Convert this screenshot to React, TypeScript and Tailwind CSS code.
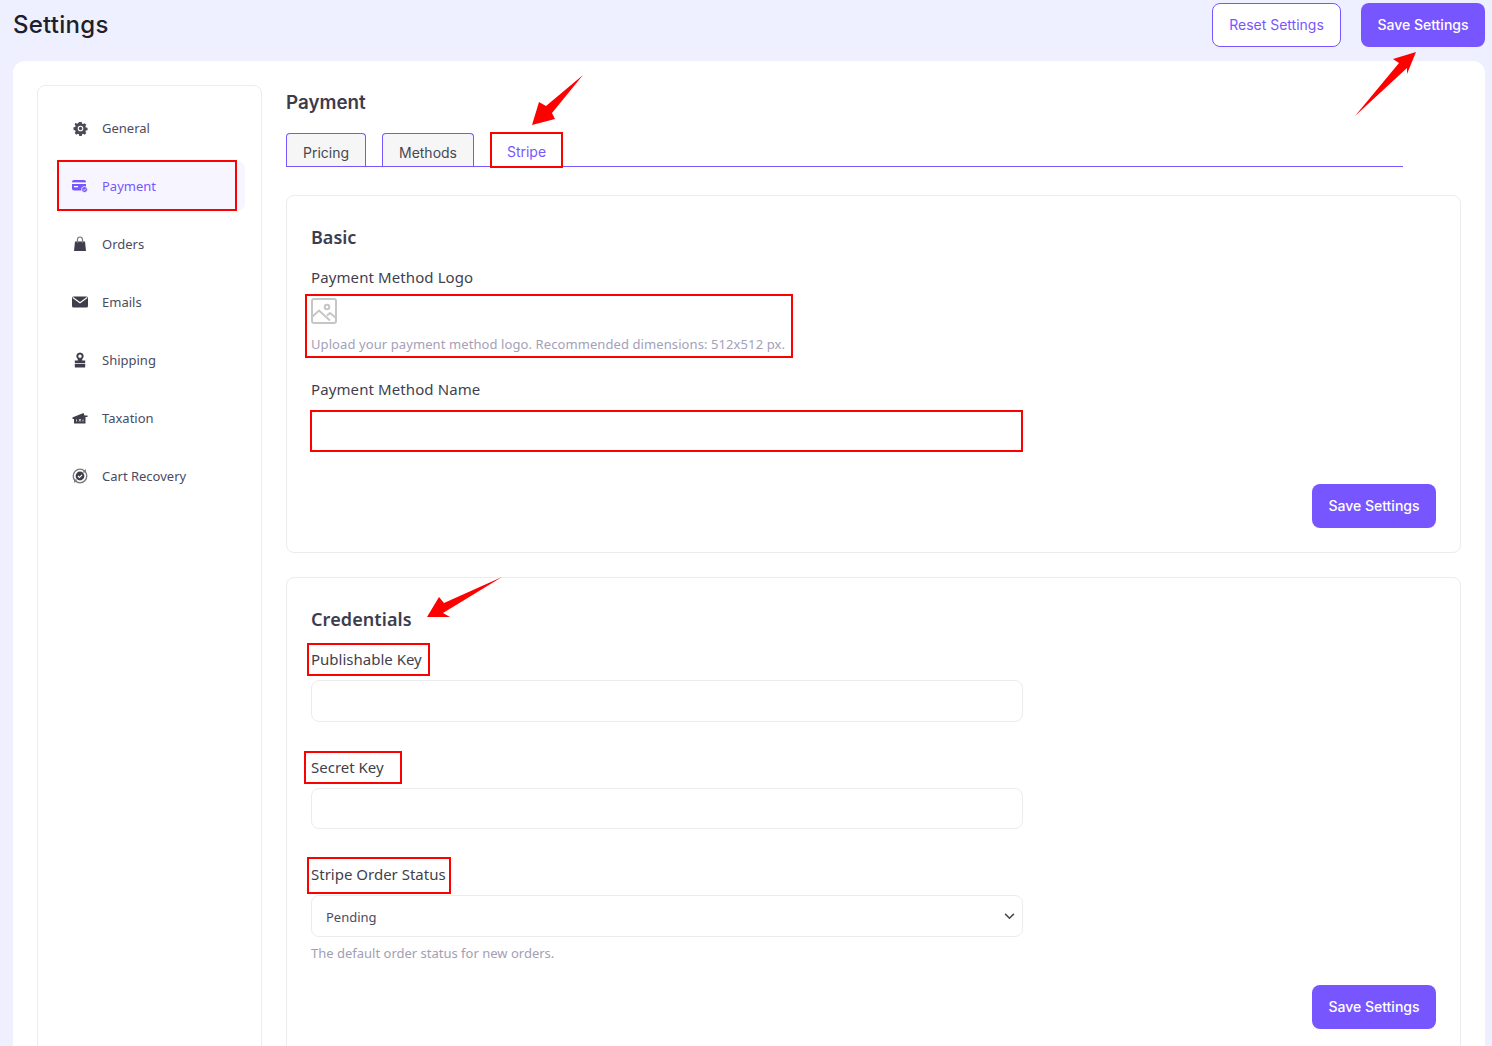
import React from "react";

function Gear() {
  return (
    <svg viewBox="0 0 16 16" className="w-[15px] h-[15px]" fill="#4a4a57">
      <path fillRule="evenodd" d="M6.7 1h2.600l.4 1.800 1.100.5 1.600-1 1.800 1.800-1 1.600.5 1.100 1.800.4v2.600l-1.800.4-.5 1.100 1 1.600-1.800 1.800-1.600-1-1.100.5-.4 1.800H6.700l-.4-1.800-1.100-.5-1.600 1-1.800-1.800 1-1.600-.5-1.100L.5 9.300V6.700l1.800-.4.5-1.100-1-1.600L2.600 1.800l1.600 1 1.100-.5zM8 5a3 3 0 1 0 0 6 3 3 0 0 0 0-6z" />
      <circle cx="8" cy="8" r="1.800" />
    </svg>
  );
}
function Card() {
  return (
    <svg viewBox="0 0 16 14" className="w-4 h-[14px]">
      <rect x="0" y="1" width="14" height="10.500" rx="2" fill="#7856ff" />
      <rect x="0" y="3.400" width="14" height="1.600" fill="#fff" />
      <rect x="2" y="7" width="4" height="1.300" fill="#fff" />
      <circle cx="12.500" cy="10.500" r="3" fill="#7856ff" stroke="#fff" strokeWidth="0.800" />
      <path d="M11.200 10.500l1 1 1.600-1.800" stroke="#fff" strokeWidth="0.800" fill="none" />
    </svg>
  );
}
function Bag() {
  return (
    <svg viewBox="0 0 16 16" className="w-4 h-4" fill="#3f3f4b">
      <path d="M3 5.500h10l1 9.500H2z" />
      <path d="M5.500 7V3.500a2.500 2.500 0 0 1 5 0V7" fill="none" stroke="#77777f" strokeWidth="1.200" />
    </svg>
  );
}
function Mail() {
  return (
    <svg viewBox="0 0 16 12" className="w-4 h-3">
      <rect x="0" y="0.500" width="16" height="11" rx="1.500" fill="#3f3f4b" />
      <path d="M0.800 1.500L8 6.800l7.200-5.300" fill="none" stroke="#fff" strokeWidth="1.100" />
    </svg>
  );
}
function Stamp() {
  return (
    <svg viewBox="0 0 16 16" className="w-4 h-4" fill="#3f3f4b">
      <path fillRule="evenodd" d="M8 .5a3.700 3.700 0 0 1 2.200 6.700V8.500h3v2.500H2.800V8.500h3V7.200A3.700 3.700 0 0 1 8 .5zm0 2a1.700 1.700 0 1 0 0 3.400 1.700 1.700 0 0 0 0-3.400z" />
      <rect x="2.800" y="11.800" width="10.400" height="3.700" rx="0.500" />
    </svg>
  );
}
function Tax() {
  return (
    <svg viewBox="0 0 16 14" className="w-4 h-[14px]" fill="#3f3f4b">
      <path d="M1.500 6L11.500 2l1 2.500H15.500V6h-2v6.500H2V8H.5V6.500z" />
      <path d="M4.500 8.500v2M7 8l1.800 2.500M8.800 8L7 10.500M11 8.500v2" stroke="#fff" strokeWidth="0.700" fill="none" />
    </svg>
  );
}
function Recovery() {
  return (
    <svg viewBox="0 0 16 16" className="w-4 h-4">
      <circle cx="8" cy="8" r="6.800" fill="none" stroke="#77777f" strokeWidth="1.300" />
      <path d="M13.900 0.900v3.600h-3.600zM2.100 15.100v-3.600h3.600z" fill="#77777f" />
      <circle cx="8" cy="8" r="4.400" fill="#3f3f4b" />
      <path d="M6 8l1.500 1.500L10 6.800" fill="none" stroke="#fff" strokeWidth="1.100" />
    </svg>
  );
}

const nav: [string, React.ReactNode, boolean][] = [
  ["General", <Gear />, false],
  ["Payment", <Card />, true],
  ["Orders", <Bag />, false],
  ["Emails", <Mail />, false],
  ["Shipping", <Stamp />, false],
  ["Taxation", <Tax />, false],
  ["Cart Recovery", <Recovery />, false],
];

function SaveButton() {
  return (
    <button className="h-11 w-[124px] rounded-lg bg-[#7856ff] text-white text-sm font-medium font-['Inter',sans-serif]">
      Save Settings
    </button>
  );
}

function Label({ children, wide }: { children: React.ReactNode; wide?: boolean }) {
  return (
    <div className={wide ? "text-[15px] leading-[22px] tracking-[0.1px] text-[#3f3f4f]" : "text-[15px] leading-[22px] text-[#3f3f4f]"}>
      {children}
    </div>
  );
}

function Tab({ label, active, className = "" }: { label: string; active?: boolean; className?: string }) {
  return (
    <div
      className={
        active
          ? `h-[33px] pt-[5px] flex items-center justify-center text-sm text-[#7856ff] bg-white ${className}`
          : `h-[33px] pt-[5px] flex items-center justify-center text-sm text-[#48484f] bg-[#f6f6f6] border border-b-0 border-[#7856ff] rounded-t ${className}`
      }
    >
      {label}
    </div>
  );
}

export default function App() {
  return (
    <div className="relative h-[1046px] w-[1492px] overflow-hidden bg-[#eef0ff] font-['Noto_Sans',sans-serif]">
      {/* header */}
      <header className="h-[61px] flex items-start justify-between pl-[13px] pr-[7px] pt-[3px]">
        <h1 className="text-2xl leading-[44px] tracking-[0.25px] font-medium text-[#1f1f2b] font-['Inter',sans-serif]">Settings</h1>
        <div className="flex gap-5 font-['Inter',sans-serif]">
          <button className="h-11 w-[129px] rounded-lg border border-[#7856ff] bg-white text-sm text-[#7856ff]">Reset Settings</button>
          <SaveButton />
        </div>
      </header>

      {/* body */}
      <div className="ml-[13px] w-[1472px] h-[985px] bg-white rounded-t-xl flex items-start gap-6 pl-6 pt-6">
        <aside className="w-[225px] h-[1000px] shrink-0 border border-[#ececf1] rounded-lg pl-5 pt-[17px] flex flex-col gap-2">
          {nav.map(([label, icon, active]) => (
            <div
              key={label}
              className={`h-[50px] w-[187px] pl-[14px] flex items-center gap-[14px] rounded-lg text-[13px] ${
                active ? "bg-[#f7f5ff] text-[#7856ff]" : "text-[#4b4b60]"
              }`}
            >
              <span className="w-4 flex justify-center">{icon}</span>
              <span className="mt-[2px]">{label}</span>
            </div>
          ))}
        </aside>

        <main className="flex-1 pr-6">
          <h2 className="leading-[34px] font-semibold text-[#3c3c4e] font-['Inter',sans-serif] mt-[1px] mb-[13px] text-[18.8px]">Payment</h2>
          <div className="w-[1117px] flex gap-4 border-b border-[#7856ff] font-['Inter',sans-serif]">
            <Tab label="Pricing" className="w-20" />
            <Tab label="Methods" className="w-[92px]" />
            <Tab label="Stripe" active className="w-[73px]" />
          </div>

          <section className="mt-7 h-[358px] border border-[#ececec] rounded-lg px-6 pt-[27px] flex flex-col">
            <h3 className="text-lg leading-[28px] font-semibold text-[#3c3c4e]">Basic</h3>
            <div className="mt-[15px]"><Label wide>Payment Method Logo</Label></div>
            <svg viewBox="0 0 26 26" className="mt-[10px] w-[26px] h-[26px]" fill="none" stroke="#c6c6c6" strokeWidth="2">
              <rect x="1" y="1" width="24" height="24" rx="2" />
              <circle cx="16" cy="9" r="2.300" />
              <path d="M1 19l7-6.500 11 10M16 17.500l3-2.500 6 5" />
            </svg>
            <div className="mt-[10px] text-[13px] leading-[20px] tracking-[0.09px] text-[#a3a1b8]">
              Upload your payment method logo. Recommended dimensions: 512x512 px.
            </div>
            <div className="mt-[24px]"><Label wide>Payment Method Name</Label></div>
            <input className="mt-[10px] block w-[712px] h-[42px] rounded-lg border border-[#ececec] bg-white" />
            <div className="flex justify-end mt-[32px]"><SaveButton /></div>
          </section>

          <section className="mt-6 h-[600px] border border-[#ececec] rounded-lg px-6 pt-[27px] flex flex-col">
            <h3 className="text-lg leading-[28px] tracking-[0.1px] font-semibold text-[#3c3c4e]">Credentials</h3>
            <div className="mt-[15px]"><Label>Publishable Key</Label></div>
            <input className="mt-[10px] block w-[712px] h-[42px] rounded-lg border border-[#ececec] bg-white" />
            <div className="mt-[34px]"><Label>Secret Key</Label></div>
            <input className="mt-[10px] block w-[712px] h-[41px] rounded-lg border border-[#ececec] bg-white" />
            <div className="mt-[34px]"><Label>Stripe Order Status</Label></div>
            <div className="relative mt-[10px] w-[712px]">
              <select className="appearance-none block w-full h-[42px] rounded-lg border border-[#ececec] bg-white pl-[14px] pt-[3px] text-[13px] text-[#4b4b60]">
                <option>Pending</option>
              </select>
              <svg viewBox="0 0 12 8" className="absolute right-2 top-[18px] w-[11px] h-[7px]" fill="none" stroke="#4b4b55" strokeWidth="1.800">
                <path d="M1 1l5 5 5-5" />
              </svg>
            </div>
            <div className="mt-[6px] text-[13px] leading-[20px] text-[#a1a0b3]">The default order status for new orders.</div>
            <div className="flex justify-end mt-[22px]"><SaveButton /></div>
          </section>
        </main>
      </div>

      {/* annotations */}
      <div className="absolute left-[57px] top-[160px] w-[180px] h-[51px] border-2 border-[#f00]" />
      <div className="absolute left-[490px] top-[132px] w-[73px] h-[36px] border-2 border-[#f00]" />
      <div className="absolute left-[305px] top-[294px] w-[488px] h-[64px] border-2 border-[#f00]" />
      <div className="absolute left-[310px] top-[410px] w-[713px] h-[42px] border-2 border-[#f00]" />
      <div className="absolute left-[307px] top-[643px] w-[123px] h-[33px] border-2 border-[#f00]" />
      <div className="absolute left-[304px] top-[751px] w-[98px] h-[33px] border-2 border-[#f00]" />
      <div className="absolute left-[307px] top-[857px] w-[144px] h-[37px] border-2 border-[#f00]" />
      <svg className="absolute left-0 top-0 w-[1492px] h-[1046px] pointer-events-none" viewBox="0 0 1492 1046" fill="#f00">
        <polygon points="583,75 546,106 539,102 532,125 555,119 552,113" />
        <polygon points="1355,116 1399,63 1393,59 1416,52 1407,74 1407,68" />
        <polygon points="502,577 444,603 439,597 427,617 450,617 443,613" />
      </svg>
    </div>
  );
}
